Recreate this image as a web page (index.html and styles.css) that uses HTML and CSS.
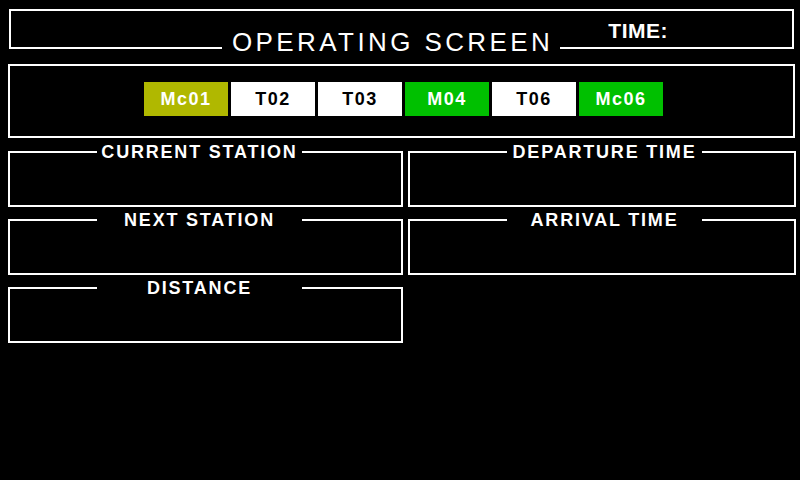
FILE: index.html
```html
<!DOCTYPE html>
<html lang="en">
<head>
<meta charset="utf-8">
<title>Operating Screen</title>
<link rel="stylesheet" href="styles.css">
</head>
<body>
<div class="screen">
  <header class="topframe">
    <div class="topframe-body">
      <span class="time-label">TIME:</span>
    </div>
    <div class="topframe-foot">
      <span class="line lead-title"></span>
      <span class="title">OPERATING SCREEN</span>
      <span class="line"></span>
    </div>
  </header>

  <section class="cars">
    <span class="car car-olive">Mc01</span>
    <span class="car car-white">T02</span>
    <span class="car car-white">T03</span>
    <span class="car car-green">M04</span>
    <span class="car car-white">T06</span>
    <span class="car car-green">Mc06</span>
  </section>

  <section class="panels">
    <div class="panel">
      <div class="panel-head"><span class="line lead-left"></span><span class="legend legend-left">CURRENT STATION</span><span class="line"></span></div>
      <div class="panel-body"></div>
    </div>
    <div class="panel">
      <div class="panel-head"><span class="line lead-right"></span><span class="legend legend-right">DEPARTURE TIME</span><span class="line"></span></div>
      <div class="panel-body"></div>
    </div>
    <div class="panel">
      <div class="panel-head"><span class="line lead-left"></span><span class="legend legend-left">NEXT STATION</span><span class="line"></span></div>
      <div class="panel-body"></div>
    </div>
    <div class="panel">
      <div class="panel-head"><span class="line lead-right"></span><span class="legend legend-right">ARRIVAL TIME</span><span class="line"></span></div>
      <div class="panel-body"></div>
    </div>
    <div class="panel">
      <div class="panel-head"><span class="line lead-left"></span><span class="legend legend-left">DISTANCE</span><span class="line"></span></div>
      <div class="panel-body"></div>
    </div>
  </section>
</div>
</body>
</html>
```

FILE: styles.css
```css
html, body {
  margin: 0;
  padding: 0;
  background: #000;
}

body {
  width: 800px;
  height: 480px;
  overflow: hidden;
  color: #fff;
  font-family: "Liberation Sans", Arial, sans-serif;
}

.screen {
  display: flex;
  flex-direction: column;
  align-items: flex-start;
  padding-top: 9px;
}

/* ---------- top frame ---------- */
.topframe {
  box-sizing: border-box;
  width: 785px;
  height: 40px;
  margin-left: 9px;
  border: 2px solid #fff;
  border-bottom: none;
  display: flex;
  flex-direction: column;
}

.topframe-body {
  flex: 1;
  display: flex;
  justify-content: flex-end;
  align-items: flex-start;
  padding: 9px 124px 0 0;
}

.time-label {
  font-size: 21px;
  font-weight: bold;
  line-height: 21px;
  letter-spacing: 0.5px;
}

.topframe-foot {
  display: flex;
  align-items: center;
  height: 2px;
  margin: 0 -2px;
}

.line {
  flex: 1;
  height: 2px;
  background: #fff;
}

.lead-title {
  flex: 0 0 213px;
}

.title {
  font-size: 26px;
  line-height: 16px;
  letter-spacing: 3.4px;
  white-space: nowrap;
  padding: 0 7px 0 10px;
  margin-bottom: 13px;
}

/* ---------- car row ---------- */
.cars {
  box-sizing: border-box;
  width: 787px;
  height: 74px;
  margin: 15px 0 0 8px;
  border: 2px solid #fff;
  display: flex;
  gap: 3px;
  padding: 16px 0 0 134px;
}

.car {
  width: 84px;
  height: 34px;
  display: flex;
  align-items: center;
  justify-content: center;
  font-size: 18px;
  font-weight: bold;
  letter-spacing: 1.5px;
}

.car-olive { background: #b0b800; color: #fff; }
.car-green { background: #00c000; color: #fff; }
.car-white { background: #fff; color: #000; }

/* ---------- info panels ---------- */
.panels {
  display: grid;
  grid-template-columns: 395px 388px;
  grid-auto-rows: 56px;
  column-gap: 5px;
  row-gap: 12px;
  margin: 13px 0 0 8px;
}

.panel {
  display: flex;
  flex-direction: column;
}

.panel-head {
  display: flex;
  align-items: center;
  height: 2px;
}

.lead-left { flex: 0 0 89px; }
.lead-right { flex: 0 0 99px; }

.legend {
  font-size: 18px;
  font-weight: bold;
  letter-spacing: 1.8px;
  line-height: 2px;
  text-align: center;
  white-space: nowrap;
}

.legend-left { flex: 0 0 205px; }
.legend-right { flex: 0 0 195px; }

.panel-body {
  flex: 1;
  border: 2px solid #fff;
  border-top: none;
}
```
